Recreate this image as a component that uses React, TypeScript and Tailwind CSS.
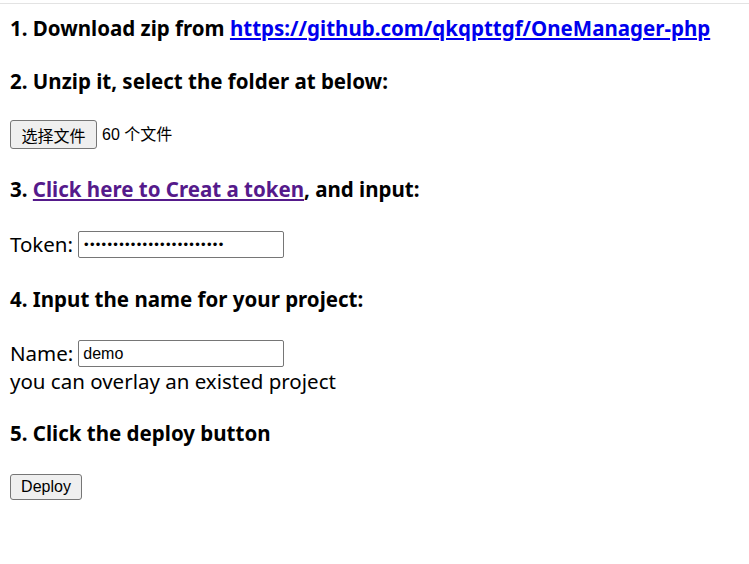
const heading = "h-6 text-[20.5px] leading-6 font-bold text-black";

export default function App() {
  return (
    <main className="min-h-screen bg-white font-['Noto_Sans','Noto_Sans_CJK_SC',sans-serif] text-black">
      <div className="h-[3px]" />
      <div className="h-px bg-[#e3e3e3]" />
      <div className="px-[10px]">
        <h3 className={`${heading} mt-[12px]`}>
          1. Download zip from{" "}
          <a href="#" className="text-[#0000ee] underline">
            https://github.com/qkqpttgf/OneManager-php
          </a>
        </h3>

        <h3 className={`${heading} mt-[29px]`}>2. Unzip it, select the folder at below:</h3>

        <div className="mt-[27px] flex h-[29px] items-center gap-[5px]">
          <button className="h-[29px] w-[87px] rounded-[3px] border border-[#767676] bg-[#efefef] text-[16px] font-['Noto_Sans_CJK_SC',sans-serif]">
            选择文件
          </button>
          <span className="text-[16px] font-['Liberation_Sans','Noto_Sans_CJK_SC',sans-serif]">60 个文件</span>
        </div>

        <h3 className={`${heading} mt-[28px]`}>
          3.{" "}
          <a href="#" className="text-[#551a8b] underline">
            Click here to Creat a token
          </a>
          , and input:
        </h3>

        <div className="mt-[30px] flex h-[27px] items-center gap-[5px] text-[20.5px]">
          <span>Token:</span>
          <div className="flex h-[27px] w-[206px] items-center rounded-[2px] border border-[#767676] px-[5px] text-[13px] leading-none tracking-[1.3px] font-['Liberation_Sans',sans-serif]">
            ••••••••••••••••••••••••
          </div>
        </div>

        <h3 className={`${heading} mt-[29px]`}>4. Input the name for your project:</h3>

        <div className="mt-[29px] flex h-[27px] items-center gap-[5px] text-[20.5px]">
          <span>Name:</span>
          <div className="flex h-[27px] w-[206px] items-center rounded-[2px] border border-[#767676] px-[4px] text-[16px] font-['Liberation_Sans',sans-serif]">
            demo
          </div>
        </div>
        <p className="mt-[2px] h-6 text-[20.5px] leading-6">you can overlay an existed project</p>

        <h3 className={`${heading} mt-[28px]`}>5. Click the deploy button</h3>

        <button className="mt-[29px] h-[26px] w-[72px] rounded-[3px] border border-[#767676] bg-[#efefef] text-[16px] font-['Liberation_Sans',sans-serif]">
          Deploy
        </button>
      </div>
    </main>
  );
}
